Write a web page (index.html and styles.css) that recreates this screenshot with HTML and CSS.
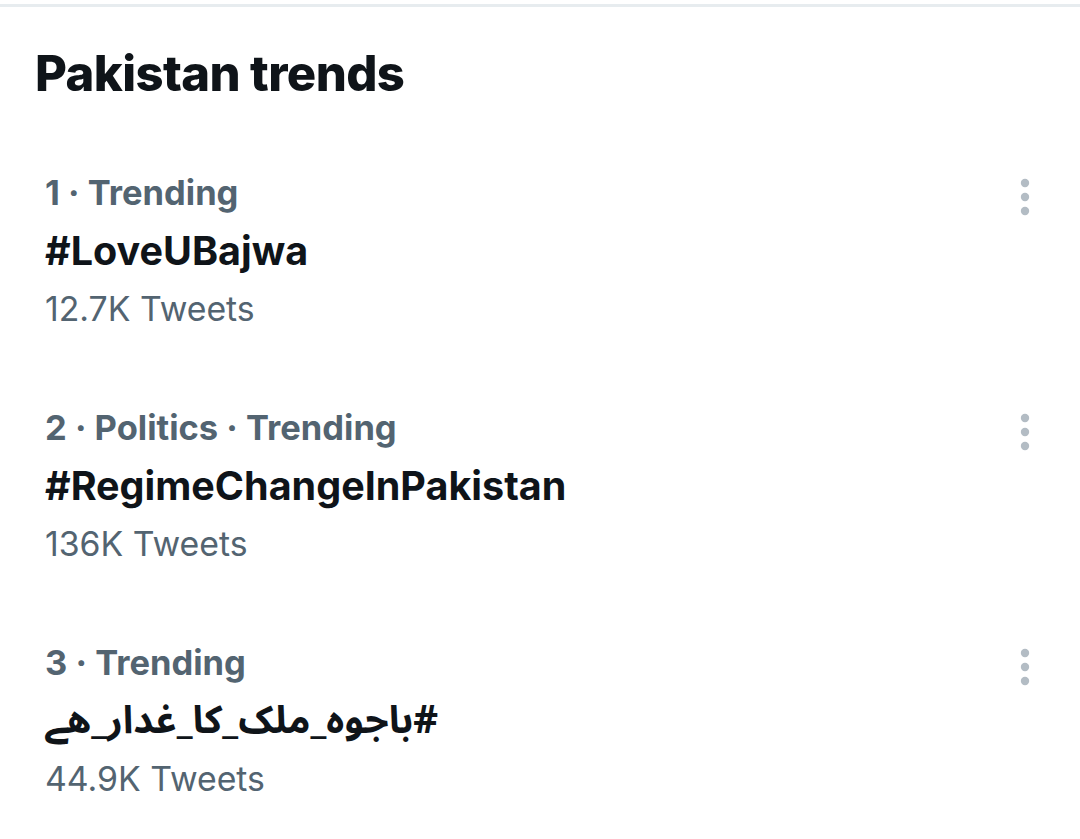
FILE: index.html
```html
<!DOCTYPE html>
<html lang="en">
<head>
<meta charset="utf-8">
<link rel="stylesheet" href="styles.css">
<title>Pakistan trends</title>
</head>
<body>
<div class="topline"></div>
<h1 class="title">Pakistan trends</h1>
<ul class="trends">
  <li class="trend">
    <div class="info">
      <div class="meta">1 · Trending</div>
      <div class="tag">#LoveUBajwa</div>
      <div class="count">12.7K Tweets</div>
    </div>
    <svg class="more" width="10" height="38" viewBox="0 0 10 38"><circle cx="5" cy="5" r="4.2"/><circle cx="5" cy="19" r="4.2"/><circle cx="5" cy="33" r="4.2"/></svg>
  </li>
  <li class="trend">
    <div class="info">
      <div class="meta">2 · Politics · Trending</div>
      <div class="tag">#RegimeChangeInPakistan</div>
      <div class="count">136K Tweets</div>
    </div>
    <svg class="more" width="10" height="38" viewBox="0 0 10 38"><circle cx="5" cy="5" r="4.2"/><circle cx="5" cy="19" r="4.2"/><circle cx="5" cy="33" r="4.2"/></svg>
  </li>
  <li class="trend">
    <div class="info">
      <div class="meta">3 · Trending</div>
      <div class="tag urdu"><bdi dir="rtl">#باجوه_ملک_کا_غدار_هے</bdi></div>
      <div class="count">44.9K Tweets</div>
    </div>
    <svg class="more" width="10" height="38" viewBox="0 0 10 38"><circle cx="5" cy="5" r="4.2"/><circle cx="5" cy="19" r="4.2"/><circle cx="5" cy="33" r="4.2"/></svg>
  </li>
</ul>
</body>
</html>
```
FILE: styles.css
```css
html, body {
  margin: 0;
  padding: 0;
  background: #ffffff;
}
body {
  font-family: Inter, "Liberation Sans", "DejaVu Sans", sans-serif;
  width: 1080px;
  height: 839px;
  overflow: hidden;
}
.topline {
  height: 3px;
  margin-top: 4px;
  background: #e7ecef;
}
.title {
  margin: 0;
  padding: 32px 0 0 35px;
  font-size: 49px;
  line-height: 70px;
  font-weight: 800;
  color: #0f1419;
  letter-spacing: -0.6px;
}
.trends {
  list-style: none;
  margin: 0;
  padding: 55px 0 0 0;
}
.trend {
  display: flex;
  justify-content: space-between;
  align-items: flex-start;
  padding: 0 50px 61px 45px;
}
.info {
  display: flex;
  flex-direction: column;
}
.meta {
  font-size: 34.5px;
  line-height: 58px;
  font-weight: 700;
  color: #536471;
}
.tag {
  font-size: 39.5px;
  line-height: 58px;
  font-weight: 700;
  color: #0f1419;
}
.urdu {
  font-family: "Noto Sans Arabic", "Noto Naskh Arabic", "DejaVu Sans", sans-serif;
  font-size: 38.5px;
}
.count {
  font-size: 33.8px;
  line-height: 58px;
  font-weight: 400;
  color: #536471;
}
.more {
  margin-top: 14px;
  fill: #b3bcc4;
}
```
